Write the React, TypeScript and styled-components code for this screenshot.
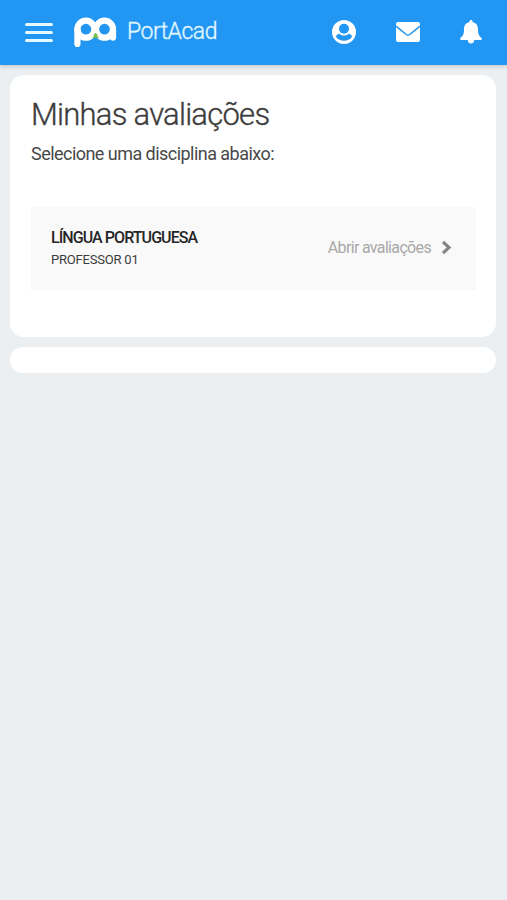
import React from "react";
import styled, { createGlobalStyle } from "styled-components";

const Global = createGlobalStyle`
  *{box-sizing:border-box}
  body{margin:0;background:#ebeff2;font-family:Roboto,"Open Sans",sans-serif;color:#3c3c3c}
  h1,h2,p{margin:0;font-weight:400}
`;
const Page = styled.div`min-height:900px;`;
const Bar = styled.header`
  height:65px;background:#2196f3;display:flex;align-items:center;padding:0 25px 2px 25px;
  box-shadow:0 1px 5px rgba(0,0,0,.2);color:#fff;
`;
const Burger = styled.div`
  width:28px;height:19px;display:flex;flex-direction:column;justify-content:space-between;
  margin:2px 21px 0 0;
`;
const Line = styled.span`height:3px;border-radius:1.5px;background:#e4f9ff;`;
const Brand = styled.span`
  font-size:23px;line-height:30px;letter-spacing:-.5px;color:#e0f7ff;
  margin:0 auto 0 10px;font-weight:300;-webkit-text-stroke:.35px currentColor;white-space:nowrap;
`;
const Actions = styled.nav`display:flex;align-items:center;gap:40px;svg{display:block}`;
const Main = styled.main`padding:10px 11px 10px 10px;display:grid;gap:10px;`;
const Card = styled.section`background:#fff;border-radius:14px;height:262px;padding:23px 20px 23px 21px;`;
const EmptyCard = styled.section`background:#fff;border-radius:13px;height:26px;`;
const Title = styled.h1`
  && {
    font-size:31px;line-height:34px;font-weight:300;letter-spacing:-.75px;white-space:nowrap;
    -webkit-text-stroke:.35px currentColor;
  }
`;
const Hint = styled.p`font-size:18px;line-height:24px;margin-top:10px;white-space:nowrap;letter-spacing:-.54px;color:#484848;`;
const Row = styled.article`
  margin-top:41px;height:83px;background:#f9f9f9;display:flex;align-items:center;
  justify-content:space-between;padding:0 24px 0 20px;
`;
const Subject = styled.h2`
  && {font-size:16px;line-height:22px;font-weight:500;letter-spacing:-.93px;color:#262626;white-space:nowrap;}
`;
const Teacher = styled.p`font-size:13px;line-height:22px;letter-spacing:-.2px;white-space:nowrap;`;
const Labels = styled.div`padding-top:1px;`;
const Open = styled.div`
  display:flex;align-items:center;gap:10px;font-size:16px;color:#a8a8a8;white-space:nowrap;
  letter-spacing:-.66px;padding-bottom:2px;
`;

function Logo() {
  return (
    <svg width="43" height="32" viewBox="0 0 43 32" fill="none">
      <g stroke="#fff" strokeWidth="6.2" strokeLinecap="round">
        <path d="M3.4 28V13.2" />
        <circle cx="11.9" cy="13.2" r="8.5" />
        <circle cx="30.5" cy="13.2" r="8.5" />
        <path d="M39 13.2V21.6" />
      </g>
      <path d="M18.3 22.5Q19 20.3 20.3 20.2Q18.8 17.8 21.2 17.2Q24.2 17.5 23.2 20.2Q24.7 20.8 25 22.5L21.6 21.7Z" fill="#73bf45" />
    </svg>
  );
}

function UserIcon() {
  return (
    <svg width="24" height="24" viewBox="0 0 24 24">
      <circle cx="12" cy="12" r="12" fill="#fff" />
      <path d="M7.2 13.7C5.3 14 4.3 15.3 4 17C6 19.5 8.7 20.8 12 20.8S18 19.5 20 17C19.7 15.3 18.7 14 16.8 13.7C14.2 16.1 9.8 16.1 7.2 13.7Z" fill="#2196f3" />
      <circle cx="12" cy="8.7" r="5" fill="#2196f3" />
    </svg>
  );
}

function MailIcon() {
  return (
    <svg width="24" height="20" viewBox="0 0 24 20">
      <rect width="24" height="20" rx="2" fill="#fff" />
      <path d="M0 4.2L10.3 12.5Q12 13.8 13.7 12.5L24 4.2" fill="none" stroke="#2196f3" strokeWidth="1.5" />
    </svg>
  );
}

function BellIcon() {
  return (
    <svg width="22" height="24" viewBox="0 0 22 24" fill="#fff">
      <path d="M11 0C12.1 0 12.6.8 12.5 2C16.2 2.8 18 5.7 18 9.3C18 14.4 19.1 16.2 21.6 18.1C22.2 18.8 21.8 20 20.8 20H14.2C14.2 22.2 13 23.5 11 23.5S7.8 22.2 7.8 20H1.2C.2 20-.2 18.8.4 18.1C2.9 16.2 4 14.4 4 9.3C4 5.7 5.8 2.8 9.5 2C9.4.8 9.9 0 11 0Z" />
    </svg>
  );
}

function Chevron() {
  return (
    <svg width="11" height="15" viewBox="0 0 11 15">
      <path d="M2 1.8L8 7.5L2 13.2" fill="none" stroke="#858585" strokeWidth="3.2" />
    </svg>
  );
}

export default function App() {
  return (
    <Page>
      <Global />
      <Bar>
        <Burger><Line /><Line /><Line /></Burger>
        <Logo />
        <Brand>PortAcad</Brand>
        <Actions>
          <UserIcon />
          <MailIcon />
          <BellIcon />
        </Actions>
      </Bar>
      <Main>
        <Card>
          <Title>Minhas avaliações</Title>
          <Hint>Selecione uma disciplina abaixo:</Hint>
          <Row>
            <Labels>
              <Subject>LÍNGUA PORTUGUESA</Subject>
              <Teacher>PROFESSOR 01</Teacher>
            </Labels>
            <Open>Abrir avaliações <Chevron /></Open>
          </Row>
        </Card>
        <EmptyCard />
      </Main>
    </Page>
  );
}
